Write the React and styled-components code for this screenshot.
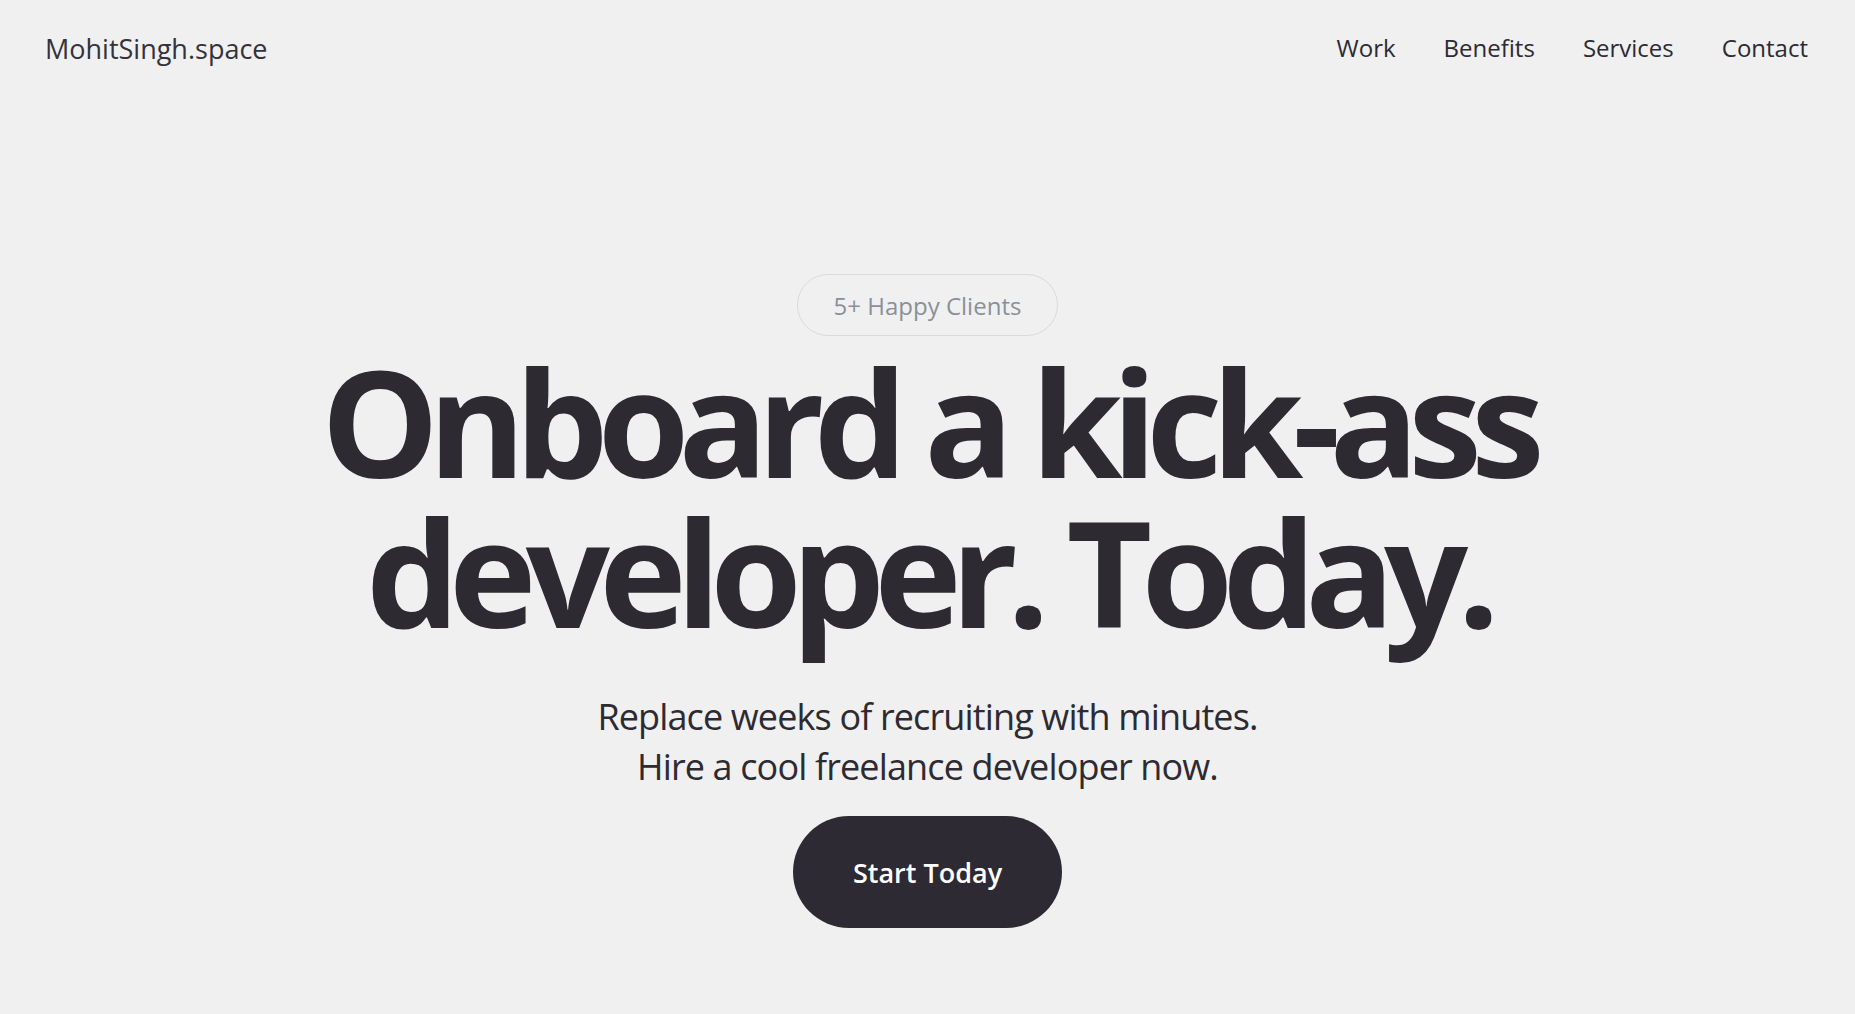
import React from "react";
import styled, { createGlobalStyle } from "styled-components";

const Global = createGlobalStyle`
  html, body { margin: 0; padding: 0; background: #f0f0f0; }
  body { font-family: "Open Sans", "Noto Sans", sans-serif; color: #2d2a32; }
  * { box-sizing: border-box; }
`;

const Page = styled.div`
  min-height: 100vh;
  display: flex;
  flex-direction: column;
`;

const Header = styled.header`
  height: 96px;
  padding: 0 47px 0 45px;
  display: flex;
  align-items: center;
  justify-content: space-between;
`;

const Logo = styled.a`
  font-size: 27px;
  color: #34323a;
  text-decoration: none;
  line-height: 1;
`;

const Nav = styled.nav`
  display: flex;
  gap: 48px;
`;

const NavLink = styled.a`
  font-size: 24px;
  color: #2d2a32;
  text-decoration: none;
  line-height: 1;
`;

const Hero = styled.main`
  display: flex;
  flex-direction: column;
  align-items: center;
  padding-top: 178px;
`;

const Badge = styled.div`
  height: 62px;
  padding: 0 36px;
  display: flex;
  align-items: center;
  border: 1px solid #dadada;
  border-radius: 31px;
  font-size: 24px;
  color: #8a9099;
`;

const Title = styled.h1`
  margin: 10px 0 0;
  font-size: 148px;
  line-height: 150px;
  font-weight: 700;
  letter-spacing: -0.0725em;
  text-align: center;
  color: #2d2a32;
`;

const Subtitle = styled.p`
  margin: 46px 0 0;
  font-size: 36px;
  line-height: 50px;
  letter-spacing: -0.024em;
  text-align: center;
  color: #2d2a32;
`;

const Button = styled.button`
  margin-top: 24px;
  height: 112px;
  padding: 0 60px;
  border: none;
  border-radius: 56px;
  background: #2e2a33;
  color: #ffffff;
  font-family: "Open Sans", sans-serif;
  font-size: 27px;
  font-weight: 600;
  letter-spacing: 0;
  cursor: pointer;
`;

export default function App() {
  return (
    <Page>
      <Global />
      <Header>
        <Logo href="#">MohitSingh.space</Logo>
        <Nav>
          <NavLink href="#">Work</NavLink>
          <NavLink href="#">Benefits</NavLink>
          <NavLink href="#">Services</NavLink>
          <NavLink href="#">Contact</NavLink>
        </Nav>
      </Header>
      <Hero>
        <Badge>5+ Happy Clients</Badge>
        <Title>
          Onboard a kick-ass
          <br />
          developer. Today.
        </Title>
        <Subtitle>
          Replace weeks of recruiting with minutes.
          <br />
          Hire a cool freelance developer now.
        </Subtitle>
        <Button>Start Today</Button>
      </Hero>
    </Page>
  );
}
